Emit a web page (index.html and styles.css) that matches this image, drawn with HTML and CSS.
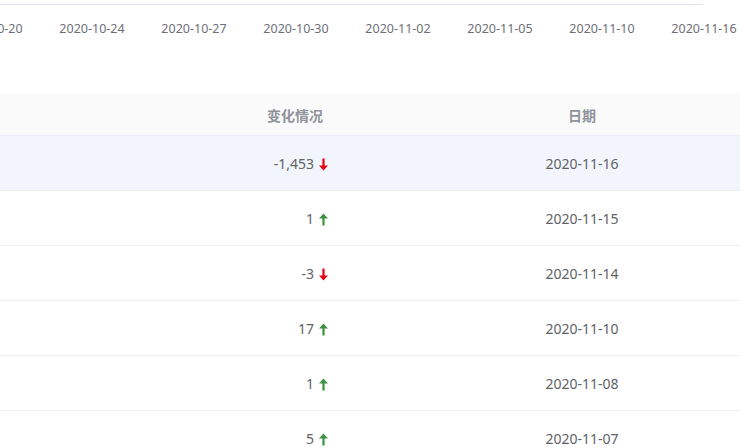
FILE: index.html
```html
<!DOCTYPE html>
<html lang="zh-CN">
<head>
  <meta charset="UTF-8" />
  <title>变化情况</title>
  <link rel="stylesheet" href="styles.css">
</head>
<body>
  <div class="chart">
    <div class="axis-line"></div>
    <div class="axis-labels">
      <span>2020-10-20</span>
      <span>2020-10-24</span>
      <span>2020-10-27</span>
      <span>2020-10-30</span>
      <span>2020-11-02</span>
      <span>2020-11-05</span>
      <span>2020-11-10</span>
      <span>2020-11-16</span>
    </div>
  </div>

  <div class="table-wrap">
    <table class="data-table">
      <colgroup>
        <col class="col-name" />
        <col class="col-change" />
        <col class="col-date" />
      </colgroup>
      <thead>
        <tr>
          <th></th>
          <th class="cell-change">变化情况</th>
          <th class="cell-date">日期</th>
        </tr>
      </thead>
      <tbody>
        <tr class="hover">
          <td></td>
          <td class="cell-change">-1,453<svg class="arrow down" viewBox="0 0 9 12"><path d="M3.4 0h2.2v7H9L4.5 12 0 7h3.4z"/></svg></td>
          <td class="cell-date">2020-11-16</td>
        </tr>
        <tr>
          <td></td>
          <td class="cell-change">1<svg class="arrow up" viewBox="0 0 9 12"><path d="M3.4 12h2.2V5H9L4.5 0 0 5h3.4z"/></svg></td>
          <td class="cell-date">2020-11-15</td>
        </tr>
        <tr>
          <td></td>
          <td class="cell-change">-3<svg class="arrow down" viewBox="0 0 9 12"><path d="M3.4 0h2.2v7H9L4.5 12 0 7h3.4z"/></svg></td>
          <td class="cell-date">2020-11-14</td>
        </tr>
        <tr>
          <td></td>
          <td class="cell-change">17<svg class="arrow up" viewBox="0 0 9 12"><path d="M3.4 12h2.2V5H9L4.5 0 0 5h3.4z"/></svg></td>
          <td class="cell-date">2020-11-10</td>
        </tr>
        <tr>
          <td></td>
          <td class="cell-change">1<svg class="arrow up" viewBox="0 0 9 12"><path d="M3.4 12h2.2V5H9L4.5 0 0 5h3.4z"/></svg></td>
          <td class="cell-date">2020-11-08</td>
        </tr>
        <tr>
          <td></td>
          <td class="cell-change">5<svg class="arrow up" viewBox="0 0 9 12"><path d="M3.4 12h2.2V5H9L4.5 0 0 5h3.4z"/></svg></td>
          <td class="cell-date">2020-11-07</td>
        </tr>
      </tbody>
    </table>
  </div>
</body>
</html>
```

FILE: styles.css
```css
body {
  margin: 0;
  width: 740px;
  height: 448px;
  overflow: hidden;
  background: #fff;
  font-family: "Noto Sans", "Noto Sans CJK SC", sans-serif;
  color: #606266;
}

.chart {
  padding-top: 4px;
  height: 90px;
}

.axis-line {
  width: 703px;
  height: 1px;
  background: #e0e3ea;
}

.axis-labels {
  display: flex;
  margin-left: -61px;
  margin-top: 15px;
}

.axis-labels span {
  flex: 0 0 102px;
  text-align: center;
  font-size: 12.5px;
  line-height: 18px;
  color: #6e7079;
}

.table-wrap {
  width: 740px;
  overflow: hidden;
}

.data-table {
  width: 824px;
  table-layout: fixed;
  border-collapse: collapse;
  font-size: 14px;
}

.col-name { width: 200px; }
.col-change { width: 140px; }
.col-date { width: 484px; }

.data-table th {
  height: 41px;
  padding: 0;
  background: #fafafa;
  color: #909399;
  font-weight: 600;
  font-family: "Noto Sans CJK SC", sans-serif;
  border-bottom: 1px solid #ebeef5;
}

.data-table td {
  height: 54px;
  padding: 0;
  border-bottom: 1px solid #ebeef5;
}

.data-table tr.hover td {
  background: #f2f6fc;
}

.cell-change {
  text-align: right;
}

th.cell-change { padding-right: 17px !important; }
td.cell-change { padding-right: 12px !important; }

.cell-date {
  text-align: center;
}

.arrow {
  width: 9px;
  height: 13px;
  margin-left: 5px;
  vertical-align: -2px;
}

.arrow.down { fill: #e60012; }
.arrow.up { fill: #3f9142; }
```
